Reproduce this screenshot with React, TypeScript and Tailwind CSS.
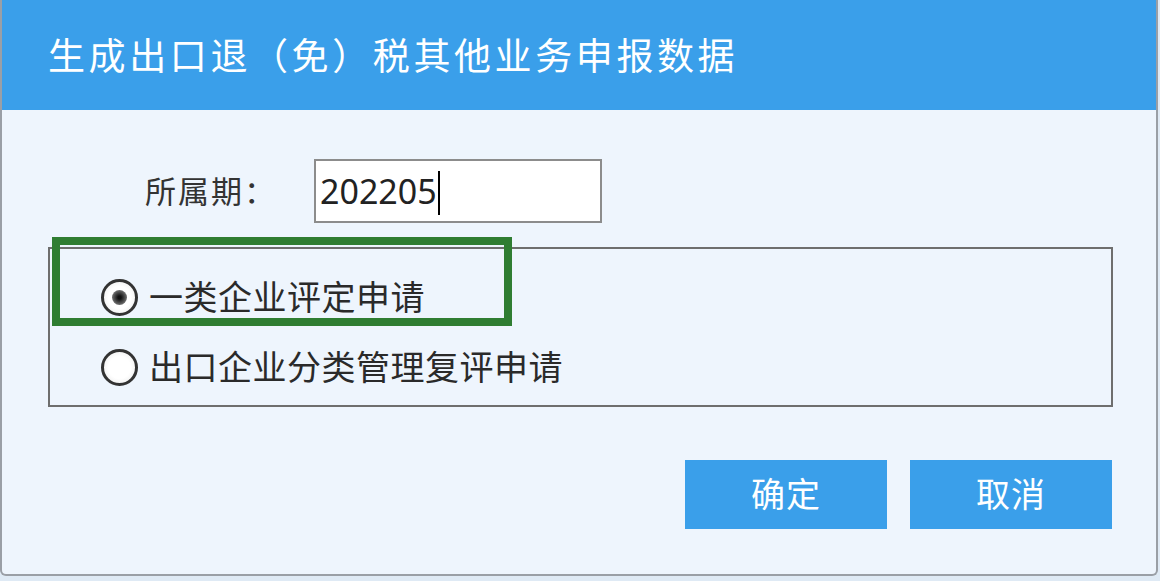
import { useState } from "react";

const font = { fontFamily: '"Noto Sans", "Noto Sans CJK SC", sans-serif' };

function Radio({ checked, label, onClick }: { checked: boolean; label: string; onClick: () => void }) {
  return (
    <div className="flex items-center h-[70px] cursor-default" onClick={onClick}>
      <div className="w-[37px] h-[37px] rounded-full border-[3px] border-[#333] bg-[radial-gradient(circle,#ffffff_50%,#e6e6e6_100%)] flex items-center justify-center ml-[51px]">
        {checked && <div className="w-[15px] h-[15px] rounded-full bg-[radial-gradient(circle,#111_15%,#555_55%,#aaa_100%)]" />}
      </div>
      <span className="ml-[11px] text-[34px] tracking-[0.5px] text-[#2a2a2a] leading-none">{label}</span>
    </div>
  );
}

export default function App() {
  const [sel, setSel] = useState(0);
  return (
    <div className="w-[1160px] h-[581px] bg-[#dfeaf5] overflow-hidden" style={font}>
      <div className="w-[1158px] h-[576px] bg-[#eef5fd] border-l-2 border-r-2 border-b-2 border-[#9a9fa6] rounded-b-[6px] flex flex-col">
        <div className="h-[110px] bg-[#3a9fea] flex items-center pl-[46px]">
          <h1 className="text-white text-[37px] tracking-[3.6px] leading-none">生成出口退（免）税其他业务申报数据</h1>
        </div>
        <div className="relative flex flex-col">
          <div className="flex items-center mt-[49px] h-[64px]">
            <span className="ml-[143px] w-[169px] text-[31px] tracking-[2px] text-[#333]">所属期：</span>
            <div className="w-[288px] h-[64px] bg-white border-2 border-[#8c8c8c] flex items-center pl-[4px]">
              <span className="text-[34px] text-[#222] leading-none">202205</span>
              <span className="w-[2px] h-[44px] bg-black ml-[1px] mt-[4px]" />
            </div>
          </div>
          <div className="mt-[24px] ml-[46px] w-[1065px] h-[160px] border-2 border-[#6e6e6e] flex flex-col justify-center pt-[10px]">
            <Radio checked={sel === 0} label="一类企业评定申请" onClick={() => setSel(0)} />
            <Radio checked={sel === 1} label="出口企业分类管理复评申请" onClick={() => setSel(1)} />
          </div>
          <div className="absolute left-[50px] top-[127px] w-[460px] h-[89px] border-[8px] border-[#2f7d32]" />
          <div className="flex justify-end gap-[23px] mt-[53px] mr-[44px]">
            <button className="w-[202px] h-[69px] bg-[#3a9fea] text-white text-[34px] tracking-[1px]">确定</button>
            <button className="w-[202px] h-[69px] bg-[#3a9fea] text-white text-[34px] tracking-[1px]">取消</button>
          </div>
        </div>
      </div>
    </div>
  );
}
